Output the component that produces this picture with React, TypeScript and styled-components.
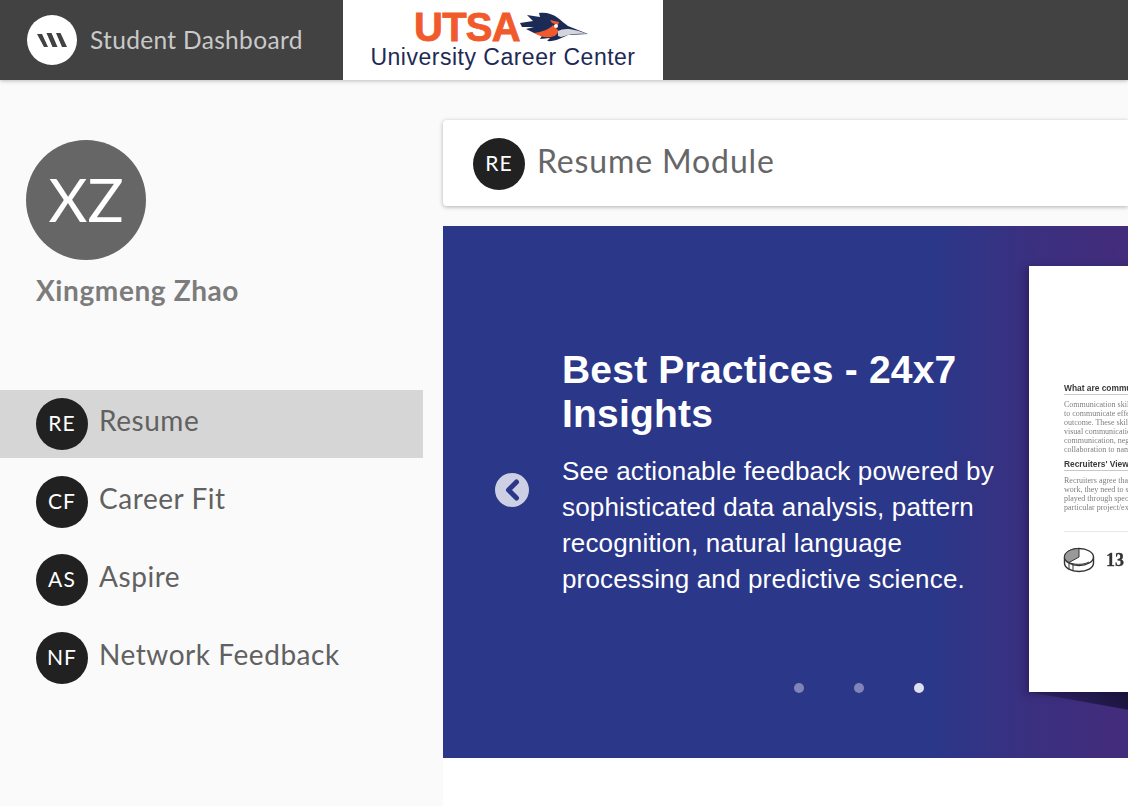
import React from "react";
import styled, { createGlobalStyle } from "styled-components";

const Global = createGlobalStyle`
  html, body { margin: 0; padding: 0; height: 100%; overflow: hidden; }
  body { background: #fafafa; font-family: "Lato", "Open Sans", sans-serif; }
  * { box-sizing: border-box; }
`;

const Page = styled.div`
  width: 1128px;
  height: 806px;
  overflow: hidden;
  display: flex;
  flex-direction: column;
  background: #fafafa;
`;

const TopBar = styled.header`
  height: 80px;
  flex: none;
  background: #424242;
  display: flex;
  box-shadow: 0 1px 4px rgba(0, 0, 0, 0.25);
  position: relative;
  z-index: 2;
`;

const Brand = styled.div`
  width: 343px;
  display: flex;
  align-items: center;
  padding-left: 27px;
  gap: 13px;
`;

const BrandMark = styled.div`
  width: 50px;
  height: 50px;
  border-radius: 50%;
  background: #fff;
  display: flex;
  align-items: center;
  justify-content: center;
`;

const BrandName = styled.span`
  color: #c9c9c9;
  font-size: 24.5px;
  font-weight: 400;
  letter-spacing: 0.33px;
  margin-bottom: 2px;
`;

const LogoBox = styled.div`
  width: 320px;
  height: 80px;
  background: #fff;
  display: flex;
  flex-direction: column;
  align-items: center;
  padding-top: 11px;
`;

const LogoTop = styled.div`
  display: flex;
  align-items: flex-start;
  height: 33px;
  margin-left: -2px;
`;

const Utsa = styled.span`
  color: #f15a2b;
  font-family: "Liberation Sans", Arial, sans-serif;
  font-weight: 700;
  font-size: 40px;
  line-height: 33px;
  letter-spacing: -0.7px;
  -webkit-text-stroke: 0.8px #f15a2b;
`;

const LogoSub = styled.span`
  color: #1e2a55;
  font-family: "Liberation Sans", Arial, sans-serif;
  font-size: 23px;
  line-height: 26px;
  letter-spacing: 0.5px;
`;

const Body = styled.div`
  flex: 1;
  display: flex;
  min-height: 0;
`;

const Sidebar = styled.aside`
  width: 423px;
  flex: none;
  padding-top: 60px;
`;

const Profile = styled.div`
  padding-left: 26px;
  height: 250px;
`;

const BigAvatar = styled.div`
  width: 120px;
  height: 120px;
  border-radius: 50%;
  background: #666;
  color: #fff;
  font-size: 60px;
  font-weight: 400;
  display: flex;
  align-items: center;
  justify-content: center;
  padding-bottom: 2px;
`;

const ProfileName = styled.div`
  margin: 12px 0 0 10px;
  color: #7c7c7c;
  font-size: 28px;
  line-height: 36px;
  font-weight: 700;
  letter-spacing: 0.6px;
`;

const Nav = styled.nav`
  display: flex;
  flex-direction: column;
  gap: 10px;
`;

const NavItem = styled.div<{ $active?: boolean }>`
  height: 68px;
  display: flex;
  align-items: center;
  gap: 11px;
  padding-left: 36px;
  background: ${(p) => (p.$active ? "#d6d6d6" : "transparent")};
`;

const Badge = styled.div`
  width: 52px;
  height: 52px;
  flex: none;
  border-radius: 50%;
  background: #212121;
  color: #fff;
  font-size: 21px;
  letter-spacing: 1.1px;
  display: flex;
  align-items: center;
  justify-content: center;
  padding-bottom: 3px;
`;

const NavLabel = styled.span`
  color: #616161;
  font-size: 28px;
  font-weight: 400;
  letter-spacing: 0.55px;
  margin-bottom: 8px;
`;

const Main = styled.main`
  flex: 1;
  min-width: 0;
  margin-left: 20px;
  padding-top: 40px;
  display: flex;
  flex-direction: column;
`;

const ModuleHead = styled.div`
  height: 86px;
  flex: none;
  background: #fff;
  border-radius: 4px 0 0 4px;
  box-shadow: 0 1px 4px rgba(0, 0, 0, 0.3);
  display: flex;
  align-items: center;
  gap: 12px;
  padding: 2px 0 0 30px;
`;

const ModuleTitle = styled.h1`
  margin: 0 0 8px;
  color: #666;
  font-size: 32px;
  font-weight: 400;
  letter-spacing: 0.86px;
`;

const Sheet = styled.div`
  flex: 1;
  margin-top: 20px;
  background: #fff;
  min-height: 0;
`;

const Carousel = styled.section`
  position: relative;
  height: 532px;
  overflow: hidden;
  background: linear-gradient(90deg, #2b3789 0%, #2b3789 72%, #3a3080 85%, #432c7b 100%);
  padding: 122px 0 0 119px;
`;

const Slide = styled.div`
  width: 450px;
  color: #fff;
  font-family: "Liberation Sans", Arial, sans-serif;
`;

const SlideTitle = styled.h2`
  margin: 0;
  font-size: 39px;
  line-height: 44px;
  font-weight: 700;
  letter-spacing: 0.2px;
`;

const SlideText = styled.p`
  margin: 17px 0 0;
  font-size: 26px;
  line-height: 36px;
  letter-spacing: 0.16px;
`;

const ArrowButton = styled.div`
  position: absolute;
  left: 52px;
  top: 247px;
  width: 34px;
  height: 34px;
  border-radius: 50%;
  background: #cdd0e4;
  display: flex;
  align-items: center;
  justify-content: center;
`;

const Dots = styled.div`
  position: absolute;
  left: 351px;
  top: 457px;
  display: flex;
  gap: 50px;
`;

const Dot = styled.span<{ $on?: boolean }>`
  width: 10px;
  height: 10px;
  border-radius: 50%;
  background: ${(p) => (p.$on ? "#dfe0ee" : "#8084b8")};
`;

const Wedge = styled.svg`
  position: absolute;
  left: 586px;
  top: 466px;
`;

const Doc = styled.div`
  position: absolute;
  left: 586px;
  top: 40px;
  width: 400px;
  height: 426px;
  background: #fff;
  box-shadow: -3px 2px 8px rgba(20, 10, 60, 0.45);
  padding: 117px 0 0 35px;
  font-family: "Liberation Serif", serif;
  overflow: hidden;
`;

const DocContent = styled.div`
  filter: blur(0.35px);
`;

const DocHeading = styled.div`
  color: #3a3a3a;
  font-family: "Liberation Sans", Arial, sans-serif;
  font-size: 8.4px;
  line-height: 10px;
  font-weight: 700;
  white-space: nowrap;
  border-bottom: 1px solid #c8c8c8;
  padding-bottom: 1px;
  margin-bottom: 5px;
`;

const DocText = styled.div`
  color: #808080;
  font-size: 8px;
  line-height: 9px;
  white-space: pre;
  margin-bottom: 5px;
`;

const DocRule = styled.div`
  border-top: 1px solid #e8e8e8;
  margin-top: 19px;
`;

const StatRow = styled.div`
  display: flex;
  align-items: center;
  gap: 11px;
  margin-top: 15px;
  margin-left: -1px;
`;

const StatNum = styled.span`
  color: #333;
  font-size: 18px;
  font-weight: 700;
  -webkit-text-stroke: 0.3px #333;
`;

export default function App() {
  const items = [
    ["RE", "Resume"],
    ["CF", "Career Fit"],
    ["AS", "Aspire"],
    ["NF", "Network Feedback"],
  ];
  return (
    <Page>
      <Global />
      <TopBar>
        <Brand>
          <BrandMark>
            <svg width="30" height="16" viewBox="0 0 30 16">
              <path d="M0 2h5l6 13H7z M9.5 1h5l6 14h-5z M19 1h4.5L30 15h-5z" fill="#424242" />
            </svg>
          </BrandMark>
          <BrandName>Student Dashboard</BrandName>
        </Brand>
        <LogoBox>
          <LogoTop>
            <Utsa>UTSA</Utsa>
            <svg width="70" height="30" viewBox="0 0 70 30" style={{ marginTop: 1 }}>
              <path d="M0 11 L13 9 L7 3 L20 5 L19 1 C26 0 33 2 38 6 C42 9 45 12 48 14 L68 22 L48 23 C42 26 34 30 27 29 L30 26 L20 27 L23 22 L14 21 L6 17 L14 15 L2 15z" fill="#1c2b55" />
              <path d="M14 21 C22 20 30 17 33 13 L38 18 C39 21 36 24 31 25 C25 26 19 24 14 21z" fill="#f15a2b" />
              <path d="M30 8 L39 10 L38 13 L32 11z" fill="#f15a2b" />
              <path d="M38 19 C44 16 52 16 67 22 C58 21 49 22 41 25 L38 24z" fill="#d2d5da" />
              <circle cx="36" cy="14" r="2" fill="#fff" />
            </svg>
          </LogoTop>
          <LogoSub>University Career Center</LogoSub>
        </LogoBox>
      </TopBar>
      <Body>
        <Sidebar>
          <Profile>
            <BigAvatar>XZ</BigAvatar>
            <ProfileName>Xingmeng Zhao</ProfileName>
          </Profile>
          <Nav>
            {items.map(([code, label], i) => (
              <NavItem key={code} $active={i === 0}>
                <Badge>{code}</Badge>
                <NavLabel>{label}</NavLabel>
              </NavItem>
            ))}
          </Nav>
        </Sidebar>
        <Main>
          <ModuleHead>
            <Badge>RE</Badge>
            <ModuleTitle>Resume Module</ModuleTitle>
          </ModuleHead>
          <Sheet>
            <Carousel>
              <Slide>
                <SlideTitle>Best Practices - 24x7 Insights</SlideTitle>
                <SlideText>
                  See actionable feedback powered by sophisticated data analysis, pattern
                  recognition, natural language processing and predictive science.
                </SlideText>
              </Slide>
              <ArrowButton>
                <svg width="16" height="22" viewBox="0 0 16 22">
                  <path d="M12.5 3 L4.5 11 L12.5 19" fill="none" stroke="#2b3789" strokeWidth="5" strokeLinecap="round" strokeLinejoin="round" />
                </svg>
              </ArrowButton>
              <Dots>
                <Dot />
                <Dot />
                <Dot $on />
              </Dots>
              <Wedge width="100" height="24" viewBox="0 0 100 24">
                <defs>
                  <linearGradient id="wedgeFade" x1="0" x2="1" y1="0" y2="0">
                    <stop offset="0" stopColor="#33276a" />
                    <stop offset="1" stopColor="#1d1540" />
                  </linearGradient>
                </defs>
                <path d="M0 0 H100 V18 z" fill="url(#wedgeFade)" />
              </Wedge>
              <Doc>
                <DocContent>
                  <DocHeading>What are communication skills?</DocHeading>
                  <DocText>{"Communication skills measure your ability\nto communicate effectively to achieve an\noutcome. These skills cover written and\nvisual communication, interpersonal\ncommunication, negotiation and\ncollaboration to name a few."}</DocText>
                  <DocHeading>Recruiters' View</DocHeading>
                  <DocText>{"Recruiters agree that to succeed at\nwork, they need to see how skills\nplayed through specific experience in a\nparticular project/example."}</DocText>
                  <DocRule />
                  <StatRow>
                    <svg width="32" height="26" viewBox="0 0 32 26">
                      <path d="M1.5 10 V16 C1.5 21 8 24.5 16 24.5 C24 24.5 30.5 21 30.5 16 V10" fill="#fff" stroke="#333" strokeWidth="1.4" />
                      <ellipse cx="16" cy="10" rx="14.5" ry="8.5" fill="#fff" stroke="#333" strokeWidth="1.4" />
                      <path d="M16 10 L16 1.5 C8 1.5 1.5 5 1.5 10 C1.5 12 3 14 6 15.5z" fill="#999" stroke="#333" strokeWidth="1" />
                      <path d="M6 15.5 C10 17.5 20 18.5 26 15" fill="none" stroke="#333" strokeWidth="1" />
                      <path d="M6 16v6 M10 18v6" stroke="#333" strokeWidth="1" />
                    </svg>
                    <StatNum>13</StatNum>
                  </StatRow>
                </DocContent>
              </Doc>
            </Carousel>
          </Sheet>
        </Main>
      </Body>
    </Page>
  );
}
